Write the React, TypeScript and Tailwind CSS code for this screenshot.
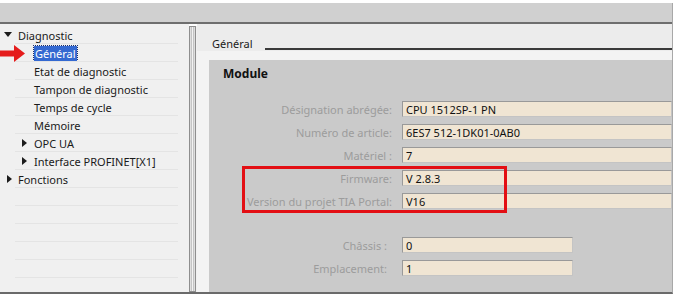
import React from 'react'

const font = "font-['Noto_Sans',_'Open_Sans',_sans-serif]"

interface TreeRow {
  label: string
  indent: number
  arrow?: 'down' | 'right'
  selected?: boolean
}

const tree: TreeRow[] = [
  { label: 'Diagnostic', indent: 0, arrow: 'down' },
  { label: 'Général', indent: 1, selected: true },
  { label: 'Etat de diagnostic', indent: 1 },
  { label: 'Tampon de diagnostic', indent: 1 },
  { label: 'Temps de cycle', indent: 1 },
  { label: 'Mémoire', indent: 1 },
  { label: 'OPC UA', indent: 1, arrow: 'right' },
  { label: 'Interface PROFINET[X1]', indent: 1, arrow: 'right' },
  { label: 'Fonctions', indent: 0, arrow: 'right' },
  { label: '', indent: 0 },
  { label: '', indent: 0 },
  { label: '', indent: 0 },
  { label: '', indent: 0 },
  { label: '', indent: 0 },
]

function Arrow({ dir }: { dir: 'down' | 'right' }) {
  if (dir === 'down') {
    return (
      <svg width="8" height="6" viewBox="0 0 8 6" className="shrink-0">
        <path d="M0 0 L8 0 L4 5 Z" fill="#1c1c1c" />
      </svg>
    )
  }
  return (
    <svg width="5" height="8" viewBox="0 0 5 8" className="shrink-0">
      <path d="M0 0 L5 4 L0 8 Z" fill="#1c1c1c" />
    </svg>
  )
}

function Field({ label, value, short }: { label: string; value: string; short?: boolean }) {
  return (
    <div className="flex items-center h-[16px] mb-[7px]">
      <div
        className={
          'w-[184px] text-right text-[11px] text-[#9c9c9c] leading-none whitespace-nowrap ' +
          (short ? 'pr-[6px]' : 'pr-[1px]')
        }
      >
        {label}
      </div>
      <div
        className={
          'ml-[9px] h-[16px] bg-[#f0e5d3] border border-[#999] border-b-[#c4c4c4] border-r-[#c4c4c4] px-[3px] flex items-center text-[11px] text-[#111] leading-none ' +
          (short ? 'w-[171px]' : 'flex-1')
        }
      >
        {value}
      </div>
    </div>
  )
}

export default function App() {
  return (
    <div className={`w-[675px] h-[297px] bg-white pt-[3px] overflow-hidden ${font}`}>
      <div className="w-[673px] h-[291px] flex flex-col border-r border-b-2 border-r-[#a8a8a8] border-b-[#6a6a6a]">
        {/* header bar */}
        <div className="h-[21px] bg-[#d0d0d0] border-b-2 border-[#6e6e6e] shrink-0" />

        <div className="flex flex-1 min-h-0">
          {/* tree */}
          <div className="w-[189px] bg-[#f0f0f0] pt-[2px] relative">
            <div className="w-[178px]">
              {tree.map((row, i) => (
                <div key={i} className="h-[18px] flex items-center relative">
                  <div className={row.indent ? 'w-[34px] flex justify-end pr-[7px]' : 'w-[18px] flex justify-end pr-[6px]'}>
                    {row.arrow && <Arrow dir={row.arrow} />}
                  </div>
                  {row.selected ? (
                    <span className="text-[11px] leading-none text-white bg-[#3469d1] px-[1px] py-[2px] outline outline-1 outline-dotted outline-[#1a2d6a]">
                      {row.label}
                    </span>
                  ) : (
                    <span className="text-[11px] leading-none text-[#1a1a1a] whitespace-nowrap">{row.label}</span>
                  )}
                  <div className="absolute left-[15px] right-0 bottom-0 h-px bg-[#e4e4e4]" />
                  {row.selected && (
                    <svg width="25" height="17" viewBox="0 0 25 17" className="absolute left-0 top-[1px]">
                      <path d="M0 5.5 H14 V0 L25 8.5 L14 17 V11.5 H0 Z" fill="#e51c1c" />
                    </svg>
                  )}
                </div>
              ))}
            </div>
          </div>

          {/* splitter */}
          <div className="w-[8px] mt-[2px] bg-[#f0f0f0] flex">
            <div className="w-[7px] border border-[#8e8e8e] bg-[#dedede] flex justify-center">
              <div className="w-[3px] bg-[#f2f2f2] border-x border-[#c4c4c4]" />
            </div>
          </div>

          {/* content */}
          <div className="flex-1 bg-[#f3f3f3] flex flex-col">
            <div className="h-[27px] bg-[#ececec] flex items-end pl-[15px] shrink-0">
              <span className="text-[11px] text-[#1a1a1a] leading-none mb-[2px]">Général</span>
              <div className="flex-1 ml-[12px] h-[2px] bg-[#3a3a3a] mb-px" />
            </div>
            <div className="h-[9px] shrink-0" />
            <div className="flex-1 ml-[12px] bg-[#cacaca] relative">
              <div className="pl-[14px] pt-[6px] text-[12px] font-bold text-[#111] leading-[16px]">Module</div>
              <div className="pt-[19px]">
                <Field label="Désignation abrégée:" value="CPU 1512SP-1 PN" />
                <Field label="Numéro de article:" value="6ES7 512-1DK01-0AB0" />
                <Field label="Matériel :" value="7" />
                <Field label="Firmware:" value="V 2.8.3" />
                <Field label="Version du projet TIA Portal:" value="V16" />
                <div className="h-[21px]" />
                <Field label="Châssis :" value="0" short />
                <Field label="Emplacement:" value="1" short />
              </div>
              <div className="absolute left-[33px] top-[106px] w-[265px] h-[47px] border-[3px] border-[#e30f14]" />
            </div>
          </div>
        </div>
      </div>
    </div>
  )
}
